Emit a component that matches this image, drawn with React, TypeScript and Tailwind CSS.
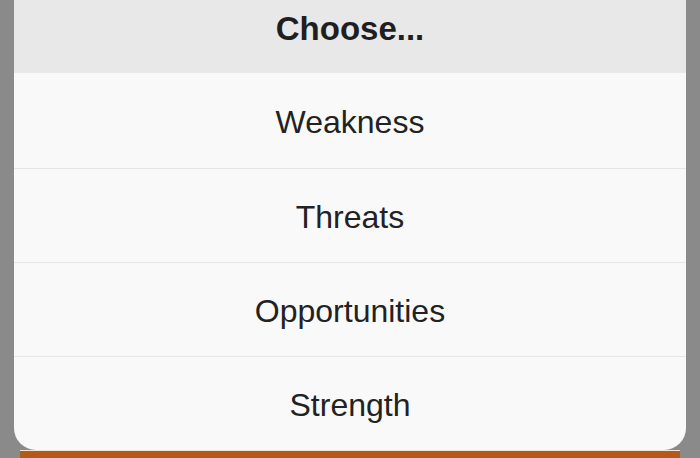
const options = ['Weakness', 'Threats', 'Opportunities', 'Strength'];

export default function App() {
  return (
    <div className="w-[700px] h-[458px] overflow-hidden bg-[#8a8a8a] px-[14px] flex flex-col" style={{ fontFamily: '"Liberation Sans", Arial, sans-serif' }}>
      <div className="relative z-10 flex flex-col rounded-b-[22px] overflow-hidden bg-[#f9f9f9]">
        <div className="h-[74px] flex items-center justify-center bg-[#e8e8e8]">
          <span className="text-[33px] font-bold text-[#1f1f1f] leading-none pb-[17px]">Choose...</span>
        </div>
        {options.map((label, i) => (
          <div
            key={label}
            className={`h-[95px] flex items-center justify-center pt-[4px] ${i > 0 ? 'border-t border-[#e6e6e6]' : ''}`}
          >
            <span className="text-[32px] text-[#222] leading-none">{label}</span>
          </div>
        ))}
      </div>
      <div className="mx-[6px] h-[8px] bg-[#b5591a] border-t border-[#f3e3d3]" />
    </div>
  );
}
